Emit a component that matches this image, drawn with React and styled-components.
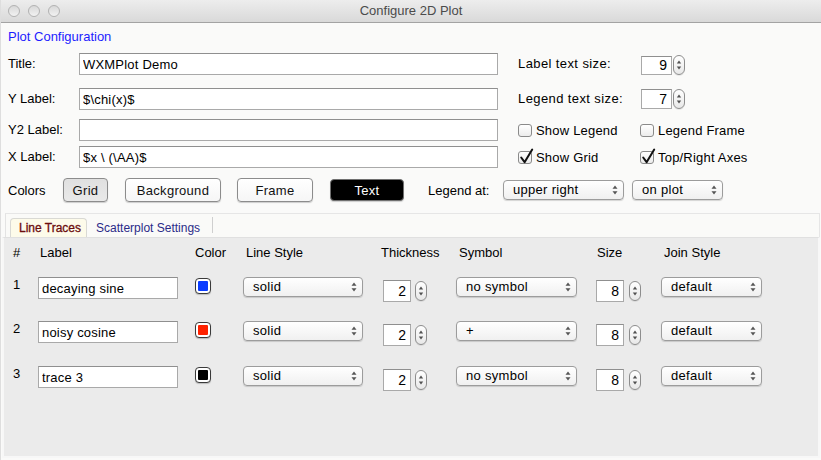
import React from "react";
import styled, { createGlobalStyle } from "styled-components";

const GlobalStyle = createGlobalStyle`
  html, body { margin: 0; padding: 0; background: #fafaf9; }
  body {
    font-family: "Liberation Sans", Arial, sans-serif;
    font-size: 13px;
    color: #000;
  }
  * { box-sizing: border-box; }
`;

const Window = styled.div`
  width: 821px;
  height: 460px;
  display: flex;
  flex-direction: column;
  overflow: hidden;
  background: #fafaf9;
  border-left: 1px solid #dedede;
`;

const TitleBar = styled.div`
  height: 23px;
  flex: none;
  display: grid;
  grid-template-columns: 1fr auto 1fr;
  align-items: center;
  background: linear-gradient(#ededed, #d9d9d9);
  border-bottom: 1px solid #a3a3a3;
`;

const Lights = styled.div`
  display: flex;
  gap: 8px;
  padding-left: 7px;
`;

const Light = styled.span`
  width: 12px;
  height: 12px;
  border-radius: 50%;
  border: 1px solid #b2b2b2;
  background: linear-gradient(#d8d8d8, #f2f2f2);
`;

const WindowTitle = styled.div`
  font-size: 13px;
  color: #4b4b4b;
  line-height: 22px;
`;

const SectionTitle = styled.div`
  margin: 6px 0 0 7px;
  line-height: 15px;
  color: #1d1dff;
`;

const FormGrid = styled.div`
  margin-top: 9px;
  padding-left: 7px;
  display: grid;
  grid-template-columns: 71px 439px 122px 1fr;
  grid-template-rows: 35px 31px 27px 22px;
  align-items: start;
`;

const FieldLabel = styled.div`
  line-height: 22px;
  height: 22px;
  white-space: nowrap;
  letter-spacing: ${(p) => p.$ls || 0}px;
`;

const TextField = styled.input`
  width: ${(p) => p.$w}px;
  height: 22px;
  margin: 0;
  padding: 0 0 0 3px;
  border: 1px solid #a9a9a9;
  border-top-color: #8f8f8f;
  background: #fff;
  font: inherit;
  font-size: 13px;
  letter-spacing: 0.2px;
  color: #000;
  outline: none;
`;

const SpinGroup = styled.div`
  display: flex;
  align-items: ${(p) => p.$align || "center"};
  gap: ${(p) => p.$gap}px;
  margin-left: ${(p) => p.$ml || 0}px;
  margin-top: ${(p) => p.$mt || 0}px;
  height: 22px;
`;

const SpinBox = styled.div`
  width: ${(p) => p.$w}px;
  height: ${(p) => p.$h}px;
  border: 1px solid #a9a9a9;
  border-top-color: #8f8f8f;
  background: #fff;
  text-align: right;
  padding-right: 4px;
  line-height: ${(p) => p.$h - 2}px;
  font-size: 14px;
`;

const StepperShell = styled.span`
  width: 12px;
  height: 20px;
  border: 1px solid #8d8d8d;
  border-radius: 6px;
  background: linear-gradient(#ffffff, #e8e8e8);
  display: flex;
  align-items: center;
  justify-content: center;
  box-shadow: 0 1px 0 rgba(0, 0, 0, 0.08);
`;

const Stepper = () => (
  <StepperShell>
    <svg width="10" height="18" viewBox="0 0 10 18">
      <path d="M5 4.5 L7.2 7.6 L2.8 7.6 Z" fill="#505050" />
      <path d="M5 13.5 L7.2 10.4 L2.8 10.4 Z" fill="#505050" />
    </svg>
  </StepperShell>
);

const Spin = ({ value, w = 28, h = 22, gap = 4, ml, mt, align }) => (
  <SpinGroup $gap={gap} $ml={ml} $mt={mt} $align={align}>
    <SpinBox $w={w} $h={h}>{value}</SpinBox>
    <Stepper />
  </SpinGroup>
);

const CheckItem = styled.label`
  display: flex;
  align-items: center;
  gap: 4px;
  height: 22px;
  white-space: nowrap;
  letter-spacing: 0.2px;
`;

const CheckBox = styled.span`
  position: relative;
  width: 14px;
  height: 13px;
  border: 1px solid #8a8a8a;
  border-radius: 3px;
  background: linear-gradient(#ffffff, #ececec);
  flex: none;
`;

const CheckMark = styled.svg`
  position: absolute;
  left: 0;
  top: -5px;
`;

const Check = ({ checked, children }) => (
  <CheckItem>
    <CheckBox>
      {checked && (
        <CheckMark width="16" height="18" viewBox="0 0 16 18">
          <path
            d="M2.2 10.5 L5.6 15.2 L13.2 2.6"
            fill="none"
            stroke="#111"
            strokeWidth="2"
            strokeLinecap="round"
            strokeLinejoin="round"
          />
        </CheckMark>
      )}
    </CheckBox>
    {children}
  </CheckItem>
);

const ColorsRow = styled.div`
  margin-top: 10px;
  padding-left: 7px;
  height: 24px;
  display: flex;
  align-items: center;
`;

const RowLabel = styled.span`
  width: ${(p) => p.$w}px;
  flex: none;
  white-space: nowrap;
`;

const ColorButton = styled.div`
  width: ${(p) => p.$w}px;
  height: ${(p) => (p.$dark ? 22 : 24)}px;
  margin-right: ${(p) => p.$mr || 0}px;
  flex: none;
  border: 1px solid ${(p) => (p.$dark ? "#707070" : "#8c8c8c")};
  border-radius: 4px;
  display: flex;
  align-items: center;
  justify-content: center;
  font-size: 13px;
  letter-spacing: 0.3px;
  color: ${(p) => (p.$dark ? "#fff" : "#111")};
  background: ${(p) =>
    p.$dark
      ? "#000"
      : p.$pressed
      ? "linear-gradient(#e0e0e0, #e9e9e9)"
      : "linear-gradient(#ffffff, #f6f6f6)"};
  box-shadow: 0 1px 1px rgba(0, 0, 0, 0.18);
`;

const SelectShell = styled.div`
  width: ${(p) => p.$w}px;
  height: 20px;
  margin-left: ${(p) => p.$ml || 0}px;
  margin-right: ${(p) => p.$mr || 0}px;
  flex: none;
  border: 1px solid #9c9c9c;
  border-radius: 4px;
  background: linear-gradient(#ffffff, #f0f0f0);
  box-shadow: 0 1px 1px rgba(0, 0, 0, 0.15);
  display: flex;
  align-items: center;
  justify-content: space-between;
  padding: 0 5px 0 9px;
  font-size: 13px;
  letter-spacing: 0.3px;
  line-height: 18px;
  white-space: nowrap;
`;

const SelectArrows = () => (
  <svg width="6" height="12" viewBox="0 0 6 12">
    <path d="M3 1.5 L5.5 4.8 L0.5 4.8 Z" fill="#555" />
    <path d="M3 10.5 L5.5 7.2 L0.5 7.2 Z" fill="#555" />
  </svg>
);

const Select = ({ w, ml, mr, children }) => (
  <SelectShell $w={w} $ml={ml} $mr={mr}>
    <span>{children}</span>
    <SelectArrows />
  </SelectShell>
);

const TabStrip = styled.div`
  margin: 11px 1px 0 4px;
  height: 24px;
  flex: none;
  display: flex;
  align-items: flex-end;
  padding-left: 4px;
  background: #fafaf8;
  border-top: 1px solid #e6e6e6;
  border-left: 1px solid #e3e3e3;
  border-right: 1px solid #e6e6e6;
`;

const Tab = styled.div`
  height: 19px;
  display: flex;
  align-items: center;
  font-size: 12px;
  padding: ${(p) => (p.$active ? "0 5px 0 8px" : "0 11px 0 8px")};
  color: ${(p) => (p.$active ? "#6c0d0d" : "#2b2b88")};
  background: ${(p) => (p.$active ? "#fdfbea" : "transparent")};
  border: 1px solid ${(p) => (p.$active ? "#d9d9d4" : "transparent")};
  border-bottom: none;
  border-radius: 4px 4px 0 0;
  -webkit-text-stroke: ${(p) => (p.$active ? "0.3px #6c0d0d" : "0")};
`;

const TabDivider = styled.span`
  width: 1px;
  height: 16px;
  margin-bottom: 4px;
  background: #cfcfcf;
`;

const Panel = styled.div`
  flex: 1;
  margin: 0 1px 2px 1px;
  background: #ebebeb;
  border-top: 1px solid #e0e0e0;
  border-left: 2px solid #f7f7f7;
  border-right: 2px solid #f7f7f7;
  border-bottom: 2px solid #f7f7f7;
  padding: 7px 0 0 9px;
`;

const TraceGrid = styled.div`
  display: grid;
  grid-template-columns: 25px 157px 48px 138px 75px 140px 65px 1fr;
  grid-template-rows: 32px 44px 45px 22px;
  align-items: start;
`;

const HeadCell = styled.div`
  line-height: 16px;
  padding-left: ${(p) => p.$pl || 0}px;
  white-space: nowrap;
`;

const RowNum = styled.div`
  line-height: 15px;
  font-size: 13px;
`;

const Swatch = styled.span`
  display: block;
  width: 16px;
  height: 16px;
  margin-top: 1px;
  border: 1px solid #3a3a3a;
  border-radius: 4px;
  background: #fff;
  padding: 2px;
  box-shadow: 0 1px 1px rgba(0, 0, 0, 0.2);
  &::after {
    content: "";
    display: block;
    width: 100%;
    height: 100%;
    border-radius: 1px;
    background: ${(p) => p.$color};
  }
`;

const traces = [
  { n: 1, label: "decaying sine", color: "#0a3cff", symbol: "no symbol" },
  { n: 2, label: "noisy cosine", color: "#ff2200", symbol: "+" },
  { n: 3, label: "trace 3", color: "#000000", symbol: "no symbol" },
];

export default function App() {
  return (
    <>
      <GlobalStyle />
      <Window>
        <TitleBar>
          <Lights>
            <Light />
            <Light />
            <Light />
          </Lights>
          <WindowTitle>Configure 2D Plot</WindowTitle>
          <span />
        </TitleBar>

        <SectionTitle>Plot Configuration</SectionTitle>

        <FormGrid>
          <FieldLabel>Title:</FieldLabel>
          <TextField $w={419} readOnly value="WXMPlot Demo" />
          <FieldLabel $ls={0.4}>Label text size:</FieldLabel>
          <Spin value="9" w={31} h={19} gap={1} ml={1} align="flex-end" />

          <FieldLabel>Y Label:</FieldLabel>
          <TextField $w={419} readOnly value="$\chi(x)$" />
          <FieldLabel $ls={0.4}>Legend text size:</FieldLabel>
          <Spin value="7" w={31} h={20} gap={1} ml={1} />

          <FieldLabel>Y2 Label:</FieldLabel>
          <TextField $w={419} readOnly value="" />
          <Check>Show Legend</Check>
          <Check>Legend Frame</Check>

          <FieldLabel>X Label:</FieldLabel>
          <TextField $w={419} readOnly value="$x \ (\AA)$" />
          <Check checked>Show Grid</Check>
          <Check checked>Top/Right Axes</Check>
        </FormGrid>

        <ColorsRow>
          <RowLabel $w={55}>Colors</RowLabel>
          <ColorButton $w={45} $mr={17} $pressed>Grid</ColorButton>
          <ColorButton $w={96} $mr={16}>Background</ColorButton>
          <ColorButton $w={76} $mr={17}>Frame</ColorButton>
          <ColorButton $w={74} $mr={24} $dark>Text</ColorButton>
          <RowLabel $w={75}>Legend at:</RowLabel>
          <Select w={121} mr={8}>upper right</Select>
          <Select w={91}>on plot</Select>
        </ColorsRow>

        <TabStrip>
          <Tab $active>Line Traces</Tab>
          <Tab>Scatterplot Settings</Tab>
          <TabDivider />
        </TabStrip>

        <Panel>
          <TraceGrid>
            <HeadCell>#</HeadCell>
            <HeadCell $pl={2}>Label</HeadCell>
            <HeadCell>Color</HeadCell>
            <HeadCell $pl={3}>Line Style</HeadCell>
            <HeadCell>Thickness</HeadCell>
            <HeadCell $pl={3}>Symbol</HeadCell>
            <HeadCell $pl={1}>Size</HeadCell>
            <HeadCell $pl={3}>Join Style</HeadCell>

            {traces.map((t) => (
              <React.Fragment key={t.n}>
                <RowNum>{t.n}</RowNum>
                <TextField $w={140} readOnly value={t.label} />
                <Swatch $color={t.color} />
                <Select w={120}>solid</Select>
                <Spin value="2" w={28} h={22} gap={4} ml={2} mt={3} />
                <Select w={121}>{t.symbol}</Select>
                <Spin value="8" w={28} h={22} gap={5} mt={3} />
                <Select w={101}>default</Select>
              </React.Fragment>
            ))}
          </TraceGrid>
        </Panel>
      </Window>
    </>
  );
}
